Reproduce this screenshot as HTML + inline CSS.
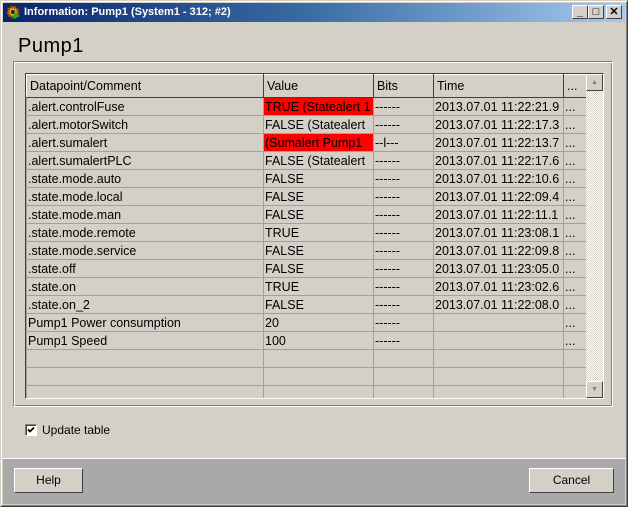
<!DOCTYPE html>
<html><head><style>
*{box-sizing:border-box;margin:0;padding:0}
body{width:628px;height:507px;background:#d4d0c8;font-family:"Liberation Sans",Arial,sans-serif;position:relative;overflow:hidden}
.win{position:absolute;left:0;top:0;width:628px;height:507px;border:1px solid;border-color:#d4d0c8 #404040 #404040 #d4d0c8;box-shadow:inset 1px 1px 0 #fff,inset -1px -1px 0 #808080}
.title{position:absolute;left:3px;top:3px;width:622px;height:19px;background:linear-gradient(to right,#0a246a,#3a6ea5 50%,#a6caf0);color:#fff;font-weight:bold;font-size:11px;line-height:19px;padding-left:21px}
.tb{position:absolute;top:5px;width:16px;height:14px;background:#d4d0c8;border:1px solid;border-color:#fff #404040 #404040 #fff;font-size:11px;line-height:12px;text-align:center;color:#000;font-weight:bold}
h1{position:absolute;left:18px;top:35px;font-size:20px;font-weight:normal;color:#000;letter-spacing:0.5px}
.grp{position:absolute;left:13px;top:61px;width:600px;height:346px;border:1px solid;border-color:#808080 #fff #fff #808080;box-shadow:inset 1px 1px 0 #fff,inset -1px -1px 0 #808080}
.tbl{position:absolute;left:25px;top:73px;width:579px;height:326px;border:1px solid;border-color:#404040 #fff #fff #404040;background:#d4d0c8;overflow:hidden}
table{border-collapse:collapse;position:absolute;left:0;top:0;font-size:12.5px}
td,th{height:18px;border:1px solid #a0a0a0;padding:0 0 0 1px;white-space:nowrap;overflow:hidden;font-weight:normal;text-align:left;line-height:16px;max-width:0}
th{height:23px;background:#d4d0c8;border:1px solid;border-color:#fff #404040 #404040 #fff;padding-left:3px}
.red{background:#ff0000}
.sb{position:absolute;left:560px;top:0;width:17px;height:324px;background:repeating-conic-gradient(#fff 0 25%,#d4d0c8 0 50%) 0 0/2px 2px}
.ab{position:absolute;left:0;width:17px;height:17px;background:#d4d0c8;border:1px solid;border-color:#fff #404040 #404040 #fff;font-size:7px;color:#808080;text-align:center;line-height:15px}
.bot{position:absolute;left:3px;top:458px;width:622px;height:46px;background:#a9a9a9;border-top:1px solid #fff}
.btn{position:absolute;top:468px;height:25px;background:#d4d0c8;border:1px solid;border-color:#fff #404040 #404040 #fff;font-size:12px;text-align:center;line-height:23px}
.cb{position:absolute;left:25px;top:424px;width:12px;height:12px;background:#fff;border:1px solid;border-color:#808080 #fff #fff #808080;box-shadow:inset 1px 1px 0 #404040}
</style></head><body>
<div class="win"></div>
<div class="title">Information: Pump1 (System1 - 312; #2)
<svg style="position:absolute;left:3px;top:2px" width="15" height="15" viewBox="0 0 15 15"><circle cx="7" cy="7" r="5" fill="#f0a000" stroke="#a05000" stroke-dasharray="2 1.5" stroke-width="3"/><circle cx="7" cy="7" r="2" fill="#0a246a"/><path d="M8 7l6 4-6 3z" fill="#20b020"/></svg></div>
<div class="tb" style="left:572px">_</div><div class="tb" style="left:588px">□</div><div class="tb" style="left:606px">✕</div>
<h1>Pump1</h1>
<div class="grp"></div>
<div class="tbl">
<table>
<colgroup><col style="width:237px"><col style="width:110px"><col style="width:60px"><col style="width:130px"><col style="width:23px"></colgroup>
<tr><th>Datapoint/Comment</th><th>Value</th><th>Bits</th><th>Time</th><th>...</th></tr>
<tr><td>.alert.controlFuse</td><td class="red">TRUE (Statealert 1</td><td>------</td><td>2013.07.01 11:22:21.9</td><td>...</td></tr>
<tr><td>.alert.motorSwitch</td><td>FALSE (Statealert</td><td>------</td><td>2013.07.01 11:22:17.3</td><td>...</td></tr>
<tr><td>.alert.sumalert</td><td class="red"> (Sumalert Pump1</td><td>--l---</td><td>2013.07.01 11:22:13.7</td><td>...</td></tr>
<tr><td>.alert.sumalertPLC</td><td>FALSE (Statealert</td><td>------</td><td>2013.07.01 11:22:17.6</td><td>...</td></tr>
<tr><td>.state.mode.auto</td><td>FALSE</td><td>------</td><td>2013.07.01 11:22:10.6</td><td>...</td></tr>
<tr><td>.state.mode.local</td><td>FALSE</td><td>------</td><td>2013.07.01 11:22:09.4</td><td>...</td></tr>
<tr><td>.state.mode.man</td><td>FALSE</td><td>------</td><td>2013.07.01 11:22:11.1</td><td>...</td></tr>
<tr><td>.state.mode.remote</td><td>TRUE</td><td>------</td><td>2013.07.01 11:23:08.1</td><td>...</td></tr>
<tr><td>.state.mode.service</td><td>FALSE</td><td>------</td><td>2013.07.01 11:22:09.8</td><td>...</td></tr>
<tr><td>.state.off</td><td>FALSE</td><td>------</td><td>2013.07.01 11:23:05.0</td><td>...</td></tr>
<tr><td>.state.on</td><td>TRUE</td><td>------</td><td>2013.07.01 11:23:02.6</td><td>...</td></tr>
<tr><td>.state.on_2</td><td>FALSE</td><td>------</td><td>2013.07.01 11:22:08.0</td><td>...</td></tr>
<tr><td>Pump1 Power consumption</td><td>20</td><td>------</td><td></td><td>...</td></tr>
<tr><td>Pump1 Speed</td><td>100</td><td>------</td><td></td><td>...</td></tr>
<tr><td></td><td></td><td></td><td></td><td></td></tr>
<tr><td></td><td></td><td></td><td></td><td></td></tr>
<tr><td></td><td></td><td></td><td></td><td></td></tr>
</table>
<div class="sb"><div class="ab" style="top:0">▲</div><div class="ab" style="top:307px">▼</div></div>
</div>
<div class="cb"><svg width="10" height="10" viewBox="0 0 10 10" style="position:absolute;left:0;top:0"><path d="M2 4.5l2 2 4-4" stroke="#000" stroke-width="1.8" fill="none"/></svg></div>
<div style="position:absolute;left:42px;top:423px;font-size:12px">Update table</div>
<div class="bot"></div>
<div class="btn" style="left:14px;width:69px">Help</div>
<div class="btn" style="left:529px;width:85px">Cancel</div>
</body></html>
